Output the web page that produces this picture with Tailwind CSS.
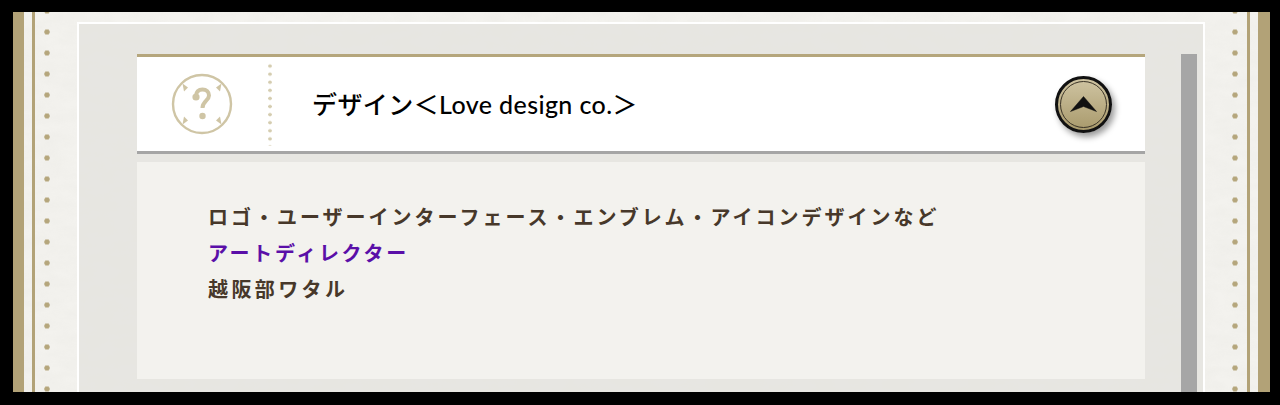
<!DOCTYPE html>
<html lang="ja">
<head>
  <meta charset="UTF-8">
  <meta name="viewport" content="width=device-width, initial-scale=1.0">
  <title>Love design co.</title>
  <script src="https://cdn.jsdelivr.net/npm/@tailwindcss/browser@4"></script>
</head>
<body class="bg-black h-[405px] overflow-hidden font-['Lato','Noto_Sans_CJK_JP',sans-serif]">

  <!-- Frame inside the black border -->
  <div class="relative ml-[13px] mt-[12px] w-[1257px] h-[380px] bg-[#f3f2ee] flex overflow-hidden">
    <!-- Paper grain -->
    <svg class="absolute inset-0 w-full h-full opacity-[0.06]">
      <filter id="grain"><feTurbulence type="fractalNoise" baseFrequency="0.04 0.09" numOctaves="4" seed="4"/><feColorMatrix values="0 0 0 0 0.4 0 0 0 0 0.4 0 0 0 0 0.35 0 0 0 1.2 -0.3"/></filter>
      <rect width="100%" height="100%" filter="url(#grain)"/>
    </svg>

    <!-- Left edge -->
    <div class="relative w-[11px] bg-[#b2a277]"></div>
    <div class="relative w-[8px]"></div>
    <div class="relative w-[3px] bg-[#b2a277]"></div>
    <div class="relative w-[42px] bg-[radial-gradient(circle,#b5a67c_2.4px,transparent_3px)] bg-[length:24px_21px] bg-[position:0_9.5px] bg-repeat-y"></div>

    <!-- Centre panel -->
    <div class="relative w-[1128px] mt-[10px] border-2 border-b-0 border-white bg-[#e5e4e0]/90 flex pl-[58px] pt-[30px]">
      <!-- Accordion card -->
      <div class="w-[1008px] flex flex-col">
        <div class="h-[100px] bg-white border-t-[3px] border-t-[#b5a67c] border-b-[3px] border-b-[#a5a5a5] flex items-center shrink-0">
          <div class="w-[131px] flex justify-center pr-[1px]">
            <svg width="64" height="64" viewBox="0 0 64 64" fill="none">
              <circle cx="32" cy="32" r="29" stroke="#cfc5a5" stroke-width="2.4"/>
              <path d="M12.5 11.5l5.5 4-4 4zM51.5 11.5l-5.5 4 4 4zM12.5 52.5l5.5-4-4-4zM51.5 52.5l-5.5-4 4-4z" fill="#cfc5a5"/>
              <path d="M26 24c0-4 2.5-6.5 6.5-6.5s6.5 2.5 6.5 6c0 5-6.5 5.5-6.5 12.5" stroke="#cfc5a5" stroke-width="4"/>
              <circle cx="26" cy="25" r="3.6" fill="#cfc5a5"/>
              <circle cx="32.5" cy="44" r="3.2" fill="#cfc5a5"/>
            </svg>
          </div>
          <div class="w-[4px] h-[84px] bg-[radial-gradient(circle,#d5cdb0_1.5px,transparent_2px)] bg-[length:4px_8.1px] bg-repeat-y"></div>
          <h2 class="ml-[40px] text-[25px] font-medium tracking-[0.4px] text-black flex-1 leading-none">デザイン＜Love design co.＞</h2>
          <!-- Collapse button -->
          <div class="mr-[33px] w-[57px] h-[57px] rounded-full border-[3px] border-[#111] bg-[linear-gradient(#cfc4a2,#a99a6c)] shadow-[3px_4px_6px_rgba(0,0,0,0.4)] flex items-center justify-center">
            <div class="w-[47px] h-[47px] rounded-full border border-[#3a3326] flex items-center justify-center">
              <svg width="27" height="16" viewBox="0 0 27 16"><path d="M13.5 0.5L26.5 15.5 13.5 10.5 0.5 15.5z" fill="#111" stroke="#111" stroke-width="0.5" stroke-linejoin="round"/></svg>
            </div>
          </div>
        </div>
        <!-- Card body -->
        <div class="mt-[8px] h-[217px] bg-[#f3f2ee] pl-[71px] pt-[37px] text-[20px] leading-[36px] font-bold tracking-[3px] text-[#47382a] shrink-0">
          <p>ロゴ・ユーザーインターフェース・エンブレム・アイコンデザインなど</p>
          <p><a class="text-[#5a0fa8] tracking-[2.7px]">アートディレクター</a></p>
          <p class="tracking-[3.4px]">越阪部ワタル</p>
        </div>
      </div>
      <!-- Scrollbar -->
      <div class="ml-[36px] w-[16px] bg-[#a6a6a6]"></div>
    </div>

    <!-- Right edge -->
    <div class="relative w-[42px] bg-[radial-gradient(circle,#b5a67c_2.4px,transparent_3px)] bg-[length:60px_21px] bg-[position:0_9.5px] bg-repeat-y"></div>
    <div class="relative w-[3px] bg-[#b2a277]"></div>
    <div class="relative w-[8px]"></div>
    <div class="relative w-[12px] bg-[#b2a277]"></div>
  </div>

</body>
</html>
